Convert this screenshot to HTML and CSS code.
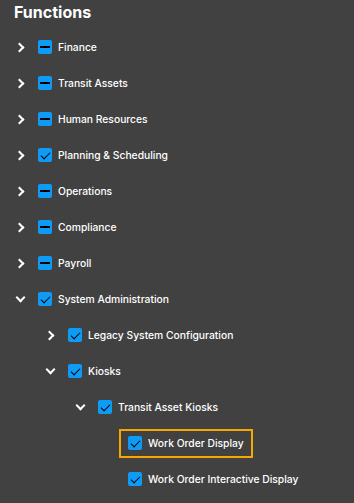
FILE: index.html
```html
<!DOCTYPE html>
<html lang="en">
<head>
    <meta charset="UTF-8">
    <title>Functions</title>
    <link rel="stylesheet" href="styles.css">
</head>
<body>
<div class="panel">
    <h1 class="title">Functions</h1>
    <ul class="tree">
        <li class="row lvl0"><span class="chev right"></span><span class="box partial"></span><span class="label">Finance</span></li>
        <li class="row lvl0"><span class="chev right"></span><span class="box partial"></span><span class="label">Transit Assets</span></li>
        <li class="row lvl0"><span class="chev right"></span><span class="box partial"></span><span class="label">Human Resources</span></li>
        <li class="row lvl0"><span class="chev right"></span><span class="box checked"></span><span class="label">Planning &amp; Scheduling</span></li>
        <li class="row lvl0"><span class="chev right"></span><span class="box partial"></span><span class="label">Operations</span></li>
        <li class="row lvl0"><span class="chev right"></span><span class="box partial"></span><span class="label">Compliance</span></li>
        <li class="row lvl0"><span class="chev right"></span><span class="box partial"></span><span class="label">Payroll</span></li>
        <li class="row lvl0"><span class="chev down"></span><span class="box checked"></span><span class="label">System Administration</span></li>
        <li class="row lvl1"><span class="chev right"></span><span class="box checked"></span><span class="label">Legacy System Configuration</span></li>
        <li class="row lvl1"><span class="chev down"></span><span class="box checked"></span><span class="label">Kiosks</span></li>
        <li class="row lvl2"><span class="chev down"></span><span class="box checked"></span><span class="label">Transit Asset Kiosks</span></li>
        <li class="row lvl3"><span class="chev"></span><span class="focus"><span class="box checked"></span><span class="label">Work Order Display</span></span></li>
        <li class="row lvl3"><span class="chev"></span><span class="box checked"></span><span class="label">Work Order Interactive Display</span></li>
    </ul>
</div>
</body>
</html>
```

FILE: styles.css
```css
* {
    padding: 0;
    margin: 0;
    box-sizing: border-box;
}
html, body {
    width: 100%;
    height: 100%;
    background-color: #414141;
    font-family: Inter, "Noto Sans", sans-serif;
    color: #fff;
}

.panel {
    padding: 2px 0 0 14px;
}

.title {
    font-size: 16px;
    font-weight: 700;
    height: 27px;
    line-height: 20px;
}

.tree {
    list-style: none;
}

.row {
    height: 36px;
    display: flex;
    align-items: center;
    font-size: 10.3px;
    font-weight: 500;
}
.lvl1 { padding-left: 30px; }
.lvl2 { padding-left: 60px; }
.lvl3 { padding-left: 90px; }

.chev {
    width: 24px;
    height: 14px;
    position: relative;
    flex-shrink: 0;
}
.chev.right::before,
.chev.down::before {
    content: "";
    position: absolute;
    width: 5px;
    height: 5px;
    border-right: 2px solid #fff;
    border-bottom: 2px solid #fff;
}
.chev.right::before {
    left: 2px;
    top: 4px;
    transform: rotate(-45deg);
}
.chev.down::before {
    left: 3px;
    top: 2px;
    transform: rotate(45deg);
}

.box {
    width: 14px;
    height: 14px;
    border-radius: 2px;
    background-color: #0d9bf5;
    position: relative;
    flex-shrink: 0;
    margin-right: 6px;
}
.box.partial::before {
    content: "";
    position: absolute;
    left: 2px;
    right: 2px;
    top: 6px;
    height: 2px;
    background-color: #000;
}
.box.checked::before {
    content: "";
    position: absolute;
    left: 5px;
    top: 2px;
    width: 4px;
    height: 8px;
    border-right: 1.5px solid #000;
    border-bottom: 1.5px solid #000;
    transform: rotate(45deg);
}

.focus {
    display: flex;
    align-items: center;
    height: 29px;
    margin-left: -9px;
    padding: 0 7px;
    border: 2px solid #f5a800;
}
```
